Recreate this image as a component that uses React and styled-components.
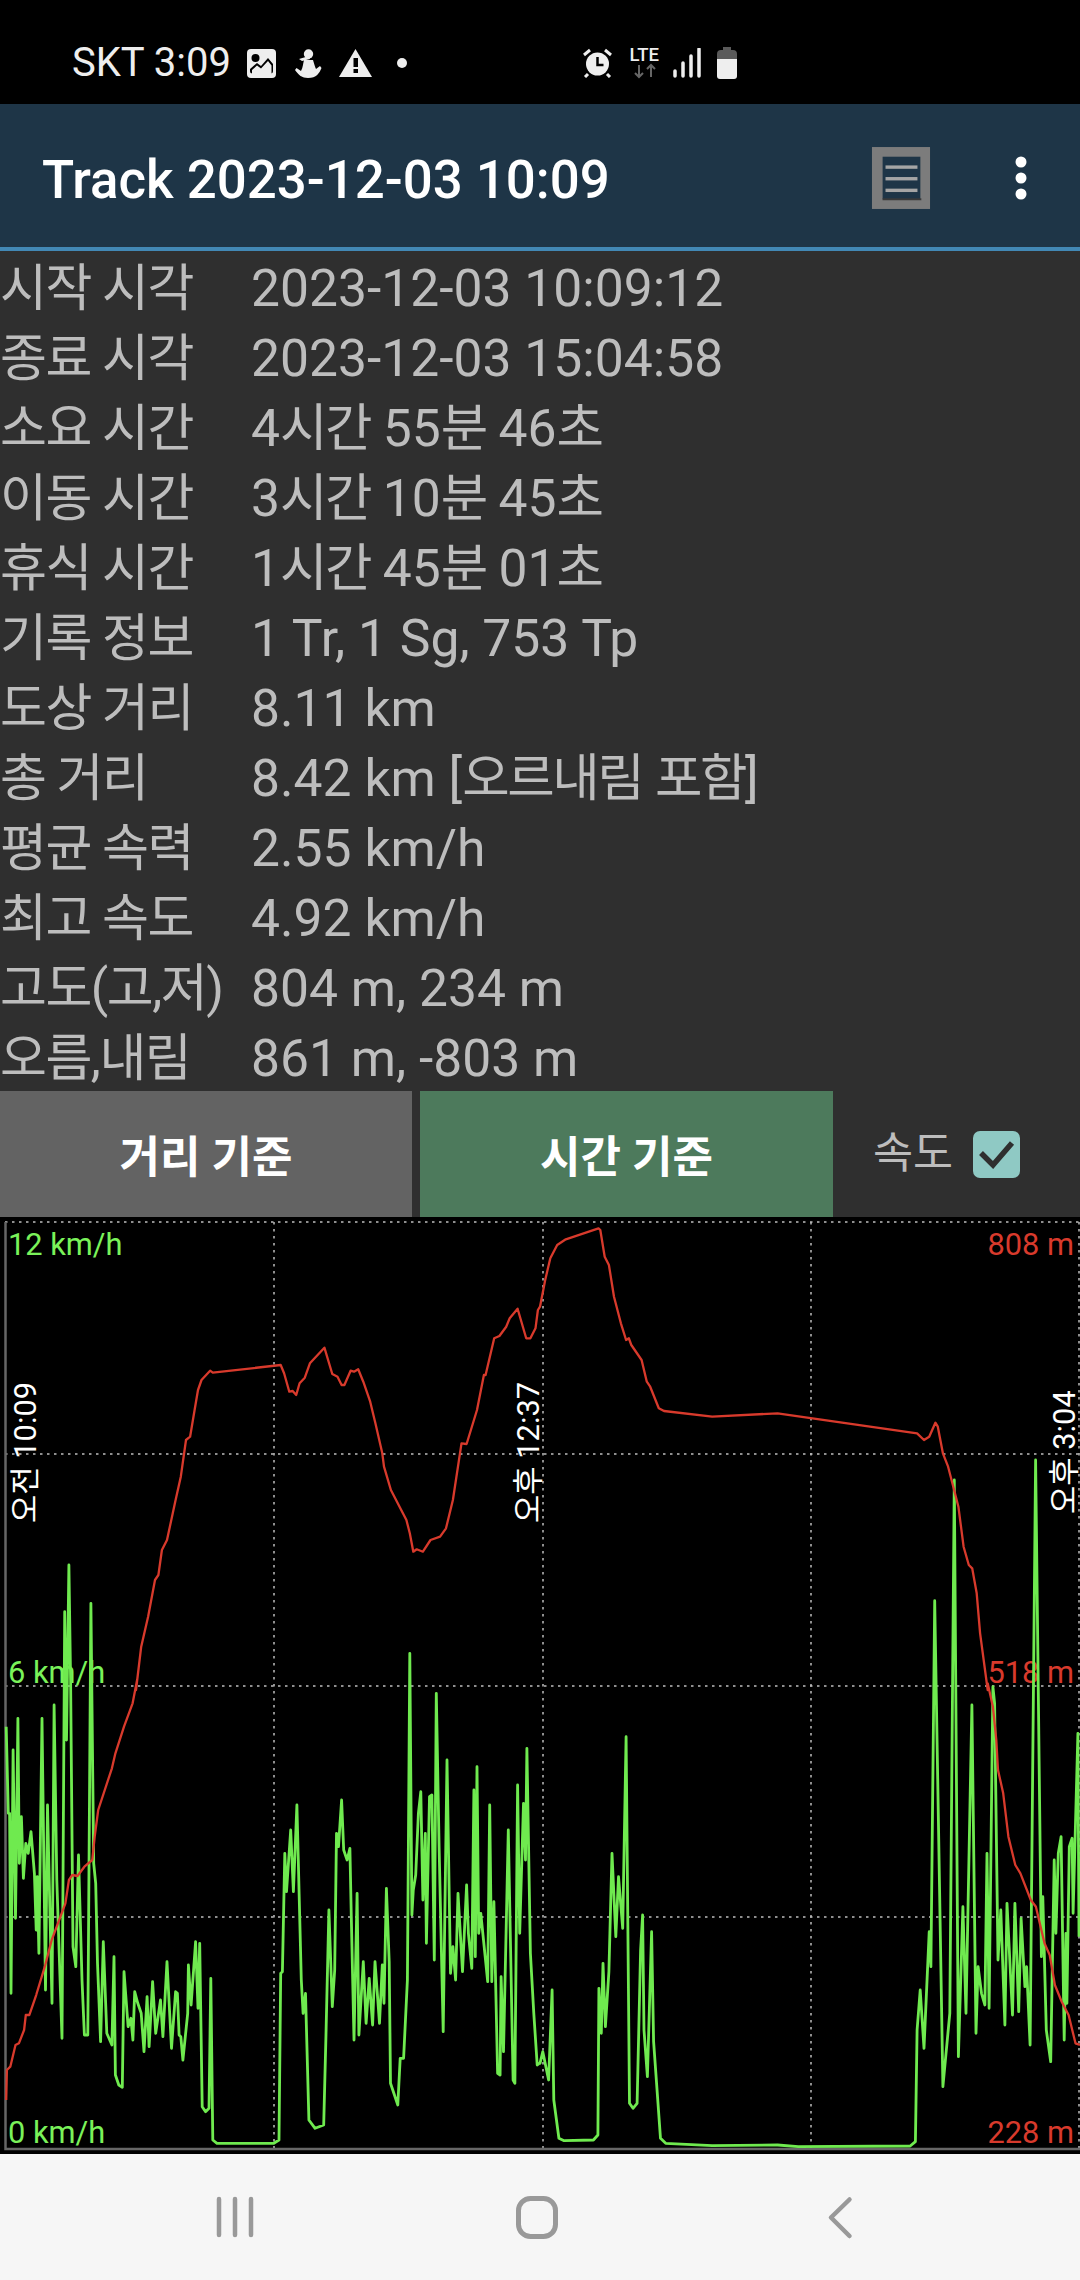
import React from "react";
import styled, { createGlobalStyle } from "styled-components";

const Global = createGlobalStyle`
  html, body { margin: 0; padding: 0; background: #000; }
  body { font-family: Roboto, "Noto Sans CJK KR", sans-serif; }
`;

const Page = styled.div`
  width: 1080px; height: 2280px; display: flex; flex-direction: column; overflow: hidden; background: #2f2f2f;
`;
const StatusBar = styled.div`
  height: 104px; background: #000; color: #eee; display: flex; align-items: center; flex: none;
  padding: 22px 0 0 72px; box-sizing: border-box;
`;
const Carrier = styled.span`
  font-size: 40px; line-height: 1; width: 175px; flex: none; white-space: nowrap;
`;
const StatusIcon = styled.svg`
  display: block; flex: none; margin-left: ${p => p.$ml || 0}px;
`;
const AppBar = styled.header`
  height: 147px; flex: none; box-sizing: border-box; background: #1e3547; border-bottom: 4px solid #4288b5;
  display: flex; align-items: center; padding: 4px 0 0 42px;
`;
const Title = styled.h1`
  margin: 6px 0 0; font-size: 52.8px; font-weight: 500; color: #fff; width: 829px; flex: none; white-space: nowrap; line-height: 1;
`;
const Overflow = styled.svg`
  display: block; flex: none; margin-left: 84px;
`;
const InfoList = styled.div`
  flex: none; display: grid; grid-template-columns: 251px 1fr; grid-auto-rows: 70px; height: 840px;
  padding-top: 3px; box-sizing: border-box;
`;
const Label = styled.div`
  font-size: 51px; color: #bdbdbd; line-height: 70px; white-space: nowrap; letter-spacing: -1.5px;
`;
const Value = styled.div`
  font-size: 51.6px; color: #bdbdbd; line-height: 70px; white-space: nowrap;
`;
const Hangul = styled.span`
  letter-spacing: -2.5px;
`;
const Controls = styled.div`
  height: 126px; flex: none; display: flex; align-items: stretch;
`;
const ModeButton = styled.button`
  width: ${p => p.$w}px; margin-right: ${p => p.$mr || 0}px; border: 0; padding: 0; flex: none;
  background: ${p => p.$active ? "#4d7a5c" : "#636363"};
  color: #fff; font: 700 44px Roboto, "Noto Sans CJK KR", sans-serif;
`;
const SpeedToggle = styled.div`
  display: flex; align-items: center; margin-left: 40px; gap: 20px;
`;
const SpeedLabel = styled.span`
  font-size: 43.5px; color: #bdbdbd; line-height: 1;
`;
const CheckBox = styled.span`
  width: 47px; height: 47px; border-radius: 7px; background: #8fc9c4; display: flex; align-items: center; justify-content: center;
`;
const Chart = styled.div`
  height: 937px; flex: none; background: #000;
`;
const ChartSvg = styled.svg`
  display: block; font-family: Roboto, "Noto Sans CJK KR", sans-serif; font-size: 30.8px;
`;
const NavBar = styled.nav`
  flex: 1; background: #f6f6f6;
`;
const NavSvg = styled.svg`
  display: block;
`;

const sx = 1568 / 540;
const conv = (arr, ox, oy) => {
  const out = [];
  for (let i = 0; i < arr.length; i += 2) out.push(`${(ox + arr[i] / sx).toFixed(1)},${(oy + arr[i + 1] / 3).toFixed(1)}`);
  return out;
};

const red5 = [18,1260,20,1170,30,1160,45,1095,55,1090,70,1050,75,1005,85,1005,105,945,130,860,150,780,190,670,200,600,210,585,225,588,245,560,268,540,275,470,285,390,325,265,335,220,360,140,385,70,398,0];
const red3 = [395,1440,410,1310,430,1220,450,1110,460,1095,470,1020,485,990,510,870,525,800,540,690,552,680,565,600,575,540,585,510,610,482,618,488,815,465,825,490,840,545,850,543,860,555,870,520,885,503,900,460,942,413,965,492,980,500,992,525,1000,525,1018,482,1028,485,1040,478,1055,515,1075,575,1090,640,1110,730,1115,770,1135,840,1180,930,1190,970,1200,1025,1210,1018,1228,1025,1250,990,1278,980,1295,955,1315,870,1340,700,1355,702,1385,600,1405,495,1410,495,1435,385,1450,378,1470,350,1480,325,1503,296,1528,385,1540,385,1555,355,1562,300];
const red4 = [0,290,15,210,30,145,50,105,75,88,170,55,175,60,188,140,200,165,215,260,235,340,250,390,258,385,265,405,295,450,310,515,320,530,345,595,360,603,500,620,690,610,1095,670,1115,690,1130,680,1148,638,1155,650,1170,730,1185,770,1200,830,1215,890,1230,1010,1245,1065,1255,1075,1268,1150,1278,1270,1300,1440];
const red6 = [1300,10,1315,80,1325,180,1330,270,1345,340,1360,470,1380,555,1395,580,1425,660,1440,680,1465,790,1480,825,1495,915,1515,965,1535,1005,1555,1090,1568,1095];
const redPts = [...conv(red5, 0, 1680), ...conv(red3, 0, 1210), ...conv(red4, 540, 1210), ...conv(red6, 540, 1680)].join(" ");

const green5 = [18,140,24,400,28,400,32,940,38,210,45,715,52,115,56,550,62,410,68,595,75,490,82,520,90,455,100,580,105,750,108,590,113,820,122,115,132,930,138,375,151,970,157,75,165,600,180,1075,188,-205,193,180,200,-345,205,0,212,800,220,860,228,525,238,900,245,1065,255,1065,264,-230,272,550,278,610,283,850,292,1085,300,785,310,1060,325,1095,331,830,335,1185,345,1215,355,1222,360,875,372,1040,380,1015,386,1080,391,935,400,970,410,1000,418,1115,427,950,433,1100,443,905,452,1060,466,960,473,1070,485,845,498,1105,510,935,515,940,520,1065,525,1070,531,1140,545,1000,547,855,555,975,568,785,575,985,580,790,587,1280,597,1295,607,1285,612,895,618,1380,630,1390,795,1390,810,1380,815,880,820,875,827,520,832,635,844,450,852,635,862,375,875,900,880,1000,887,940,897,1320,915,1345,940,1335,947,1050,955,690,965,980,972,870,977,460,983,500,992,360,998,510,1008,540,1016,505,1020,710,1028,1080,1037,640,1042,1065,1055,845,1063,1030,1072,895,1082,1035,1089,845,1102,1030,1110,855,1115,970,1122,625,1130,845,1134,1210,1155,1275,1162,1135,1172,1135,1183,900,1190,-80,1196,705,1200,630,1207,585,1215,400,1222,335,1228,660,1235,460,1238,790,1247,350,1254,345,1261,840,1267,40,1275,500,1287,1055,1298,240,1308,880,1315,800,1323,900,1330,640,1343,875,1355,615,1360,760,1370,865,1376,330,1380,830,1385,260,1390,760,1396,700,1404,780,1416,905,1422,375,1428,905,1434,665,1445,1180,1452,1185,1455,890,1462,1115,1476,450,1490,1200,1495,1210,1503,315,1509,760,1520,370,1526,540,1530,205,1540,820,1550,1000,1560,1155,1566,1150];
const green6 = [0,1150,8,1115,25,1200,35,930,40,1260,55,1375,70,1382,155,1380,168,1365,171,925,178,1060,183,850,190,1040,200,875,209,520,220,770,228,590,240,745,250,170,260,1270,270,1285,282,1270,292,810,298,705,302,1050,312,1190,324,755,330,1085,350,1375,365,1390,500,1397,690,1395,750,1400,1075,1398,1090,1385,1095,1050,1104,930,1115,1105,1130,755,1135,860,1146,-238,1170,1220,1190,1000,1203,-600,1215,1130,1228,680,1237,1000,1254,75,1266,1060,1272,860,1282,940,1292,975,1298,520,1304,985,1315,20,1320,70,1330,840,1338,690,1350,1035,1356,670,1372,1005,1379,670,1390,995,1397,715,1408,920,1413,860,1423,1095,1439,-660,1456,830,1460,650,1470,1050,1483,1145,1493,540,1498,760,1505,520,1513,470,1522,1080,1527,760,1530,970,1537,500,1545,475,1548,700,1562,160,1565,770];
const greenPts = [...conv(green5, 0, 1680), ...conv(green6, 540, 1680)].join(" ");

const rows = [
  ["시작 시각", "2023-12-03 10:09:12"],
  ["종료 시각", "2023-12-03 15:04:58"],
  ["소요 시간", "4시간 55분 46초"],
  ["이동 시간", "3시간 10분 45초"],
  ["휴식 시간", "1시간 45분 01초"],
  ["기록 정보", "1 Tr, 1 Sg, 753 Tp"],
  ["도상 거리", "8.11 km"],
  ["총 거리", "8.42 km [오르내림 포함]"],
  ["평균 속력", "2.55 km/h"],
  ["최고 속도", "4.92 km/h"],
  ["고도(고,저)", "804 m, 234 m"],
  ["오름,내림", "861 m, -803 m"],
];

const withHangul = (text) =>
  text.split(/([\uac00-\ud7a3]+)/).map((part, i) =>
    i % 2 ? <Hangul key={i}>{part}</Hangul> : part
  );

const gridX = [274, 543, 811];
const gridY = [1454, 1686, 1917];

export default function App() {
  return (
    <Page>
      <Global />
      <StatusBar>
        <Carrier>SKT 3:09</Carrier>
        <StatusIcon width="29" height="29" viewBox="0 0 29 29">
          <rect width="29" height="29" rx="4" fill="#eee" />
          <circle cx="8.5" cy="9" r="4" fill="#000" />
          <path d="M3 20l7-6 4 3 7-8 5 6v7a2.500 2.500 0 0 1-2.500 2.500H5.500A2.500 2.500 0 0 1 3 22z" fill="#000" />
          <path d="M5 21l5-4.500 4 3 7-7.500 3.500 4.500V25H5z" fill="#eee" />
        </StatusIcon>
        <StatusIcon $ml={19} width="27" height="29" viewBox="0 0 27 29">
          <circle cx="13.500" cy="5" r="4.700" fill="#eee" />
          <path d="M4 10l10-3 1 3-8 2z" fill="#eee" />
          <path d="M9 11h9c1 3 2 7 3 9l4-3 1.500 2c-2 5-5 10-13.500 10-6 0-9.500-3-13-8l1.500-2 4.500 3c2-4 2-7 3-11z" fill="#eee" />
        </StatusIcon>
        <StatusIcon $ml={17} width="33" height="28" viewBox="0 0 33 28">
          <path d="M16.500 0L33 28H0z" fill="#eee" />
          <rect x="14.500" y="9" width="4.500" height="9" fill="#000" />
          <rect x="14.500" y="20" width="4.500" height="4" fill="#000" />
        </StatusIcon>
        <StatusIcon $ml={25} width="10" height="10" viewBox="0 0 10 10">
          <circle cx="5" cy="5" r="5" fill="#eee" />
        </StatusIcon>
        <StatusIcon $ml={176} width="29" height="30" viewBox="0 0 29 30">
          <circle cx="14.500" cy="16" r="11.500" fill="#eee" />
          <path d="M14.500 9v8h6" stroke="#000" strokeWidth="2.500" fill="none" />
          <path d="M1 7l6-5M28 7l-6-5M5 26l-3 3M24 26l3 3" stroke="#eee" strokeWidth="3" />
        </StatusIcon>
        <StatusIcon $ml={17} width="36" height="32" viewBox="0 0 36 32">
          <text x="0.500" y="14" fontFamily="Roboto" fontWeight="500" fontSize="18.500" fill="#eee">LTE</text>
          <path d="M10 18v12M6 26l4 4 4-4" stroke="#666" strokeWidth="2" fill="none" />
          <path d="M22 30V18M18 22l4-4 4 4" stroke="#666" strokeWidth="2" fill="none" />
        </StatusIcon>
        <StatusIcon $ml={7} width="30" height="30" viewBox="0 0 30 30">
          <path d="M3 23v5M11 15v13M19 8v20M27 1v27" stroke="#eee" strokeWidth="3.500" strokeLinecap="round" />
        </StatusIcon>
        <StatusIcon $ml={14} width="22" height="32" viewBox="0 0 22 32">
          <path d="M7 0h8v3h2a4 4 0 0 1 4 4v5H1V7a4 4 0 0 1 4-4h2z" fill="#5a5a5a" />
          <path d="M1 12h20v17a3 3 0 0 1-3 3H4a3 3 0 0 1-3-3z" fill="#eee" />
        </StatusIcon>
      </StatusBar>

      <AppBar>
        <Title>Track 2023-12-03 10:09</Title>
        <StatusIcon width="60" height="64" viewBox="0 0 62 66">
          <g style={{ filter: "blur(0.8px)" }}>
            <rect x="1" y="1" width="60" height="64" fill="#7c7c7c" />
            <rect x="12" y="11" width="39" height="44" fill="#1e3547" />
            <rect x="12" y="54" width="40" height="2" fill="#3a3a3a" />
            <rect x="15" y="20" width="33" height="3.500" fill="#a5a5a5" />
            <rect x="15" y="32" width="33" height="3.500" fill="#a5a5a5" />
            <rect x="15" y="44" width="33" height="3.500" fill="#a5a5a5" />
          </g>
        </StatusIcon>
        <Overflow width="12" height="44" viewBox="0 0 12 44">
          <circle cx="6" cy="6" r="5.500" fill="#fff" />
          <circle cx="6" cy="22" r="5.500" fill="#fff" />
          <circle cx="6" cy="38" r="5.500" fill="#fff" />
        </Overflow>
      </AppBar>

      <InfoList>
        {rows.map(([k, v]) => (
          <React.Fragment key={k}>
            <Label>{k}</Label>
            <Value>{withHangul(v)}</Value>
          </React.Fragment>
        ))}
      </InfoList>

      <Controls>
        <ModeButton $w={412} $mr={8}>거리 기준</ModeButton>
        <ModeButton $w={413} $active>시간 기준</ModeButton>
        <SpeedToggle>
          <SpeedLabel>속도</SpeedLabel>
          <CheckBox>
            <svg width="37" height="30" viewBox="0 0 37 30">
              <path d="M3 14l12 12L34 4" stroke="#2f2f2f" strokeWidth="5.500" fill="none" />
            </svg>
          </CheckBox>
        </SpeedToggle>
      </Controls>

      <Chart>
        <ChartSvg width="1080" height="937" viewBox="0 1217 1080 937">
          <g stroke="#bdbdbd" strokeWidth="1.500" strokeDasharray="2.500 4.500">
            {gridX.map(x => <line key={x} x1={x} x2={x} y1="1222" y2="2152" />)}
            {gridY.map(y => <line key={y} x1="5" x2="1080" y1={y} y2={y} />)}
            <line x1="5" x2="1080" y1="1222" y2="1222" />
            <line x1="1079" x2="1079" y1="1222" y2="2149" />
          </g>
          <path d="M5.500 1222V2149H1080" stroke="#666" strokeWidth="2.500" fill="none" />

          <g fill="#7af25a">
            <text x="8" y="1255">12 km/h</text>
            <text x="8" y="1683">6 km/h</text>
            <text x="8" y="2143">0 km/h</text>
          </g>
          <g fill="#d83a2c" textAnchor="end">
            <text x="1074" y="1255">808 m</text>
            <text x="1074" y="1683">518 m</text>
            <text x="1074" y="2143">228 m</text>
          </g>
          <g fill="#fff">
            <text transform="translate(36 1523) rotate(-90)">오전 10:09</text>
            <text transform="translate(539 1523) rotate(-90)">오후 12:37</text>
            <text transform="translate(1075 1514) rotate(-90)">오후 3:04</text>
          </g>

          <polyline points={greenPts} fill="none" stroke="#6fea4f" strokeWidth="2.800" strokeLinejoin="round" />
          <polyline points={redPts} fill="none" stroke="#d83a2c" strokeWidth="2.300" strokeLinejoin="round" />
        </ChartSvg>
      </Chart>

      <NavBar>
        <NavSvg width="1080" height="126" viewBox="0 2154 1080 126">
          <path d="M219 2199v36M235 2199v36M251 2199v36" stroke="#999" strokeWidth="4.500" strokeLinecap="round" />
          <rect x="518.500" y="2198.500" width="37" height="38" rx="12" stroke="#999" strokeWidth="5" fill="none" />
          <path d="M849.500 2199.500L831 2217.500l18.500 18.500" stroke="#999" strokeWidth="4.500" strokeLinecap="round" strokeLinejoin="round" fill="none" />
        </NavSvg>
      </NavBar>
    </Page>
  );
}
